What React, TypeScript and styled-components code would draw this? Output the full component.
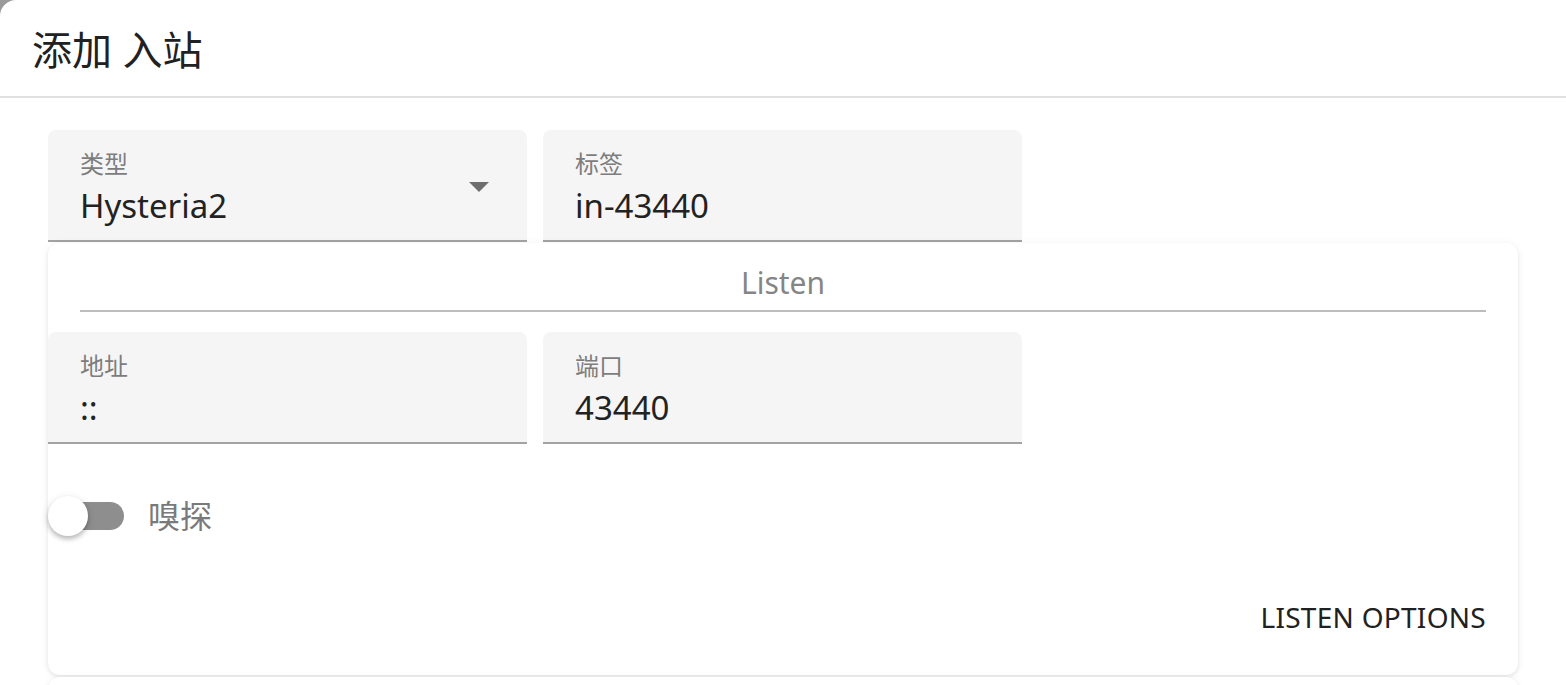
import React from "react";
import styled, { createGlobalStyle } from "styled-components";

const Global = createGlobalStyle`
  html, body { margin: 0; padding: 0; height: 100%; }
  body {
    background: #9a9a9a;
    overflow: hidden;
    font-family: "Noto Sans", "Noto Sans CJK SC", sans-serif;
  }
`;

const Dialog = styled.div`
  background: #fff;
  border-top-left-radius: 16px;
  width: 1566px;
  height: 685px;
  overflow: hidden;
  display: flex;
  flex-direction: column;
`;

const Header = styled.div`
  padding: 30px 32px 26px;
  border-bottom: 2px solid #e0e0e0;
`;

const Title = styled.h1`
  margin: 0;
  font-size: 40px;
  line-height: 40px;
  font-weight: 400;
  color: #212121;
`;

const Body = styled.div`
  padding: 32px 48px 0;
  display: flex;
  flex-direction: column;
  background: #fff;
`;

const Row = styled.div`
  display: flex;
  gap: 16px;
`;

const Field = styled.div`
  width: 479px;
  height: 110px;
  box-sizing: content-box;
  background: #f5f5f5;
  border-radius: 8px 8px 0 0;
  border-bottom: 2px solid #a3a3a3;
  display: flex;
  align-items: center;
`;

const FieldBody = styled.div`
  flex: 1;
  align-self: stretch;
  padding: 22px 32px 0;
  display: flex;
  flex-direction: column;
`;

const Label = styled.div`
  font-size: 24px;
  line-height: 24px;
  color: #7d7d7d;
  margin-bottom: 13px;
`;

const Value = styled.div`
  font-size: 33px;
  line-height: 34px;
  color: #222;
`;

const Arrow = styled.div`
  width: 0;
  height: 0;
  border-left: 10px solid transparent;
  border-right: 10px solid transparent;
  border-top: 10px solid #6e6e6e;
  margin: 3px 38px 0 0;
`;

const Card = styled.div`
  margin-top: 1px;
  width: 1470px;
  height: 432px;
  background: #fff;
  border-radius: 12px;
  box-shadow: 0 2px 4px rgba(0, 0, 0, 0.08), 0 1px 10px rgba(0, 0, 0, 0.05);
  display: flex;
  flex-direction: column;
`;

const SectionTitle = styled.div`
  margin: 25px 32px 0;
  padding-bottom: 12px;
  border-bottom: 2px solid #bdbdbd;
  text-align: center;
  font-size: 30px;
  line-height: 30px;
  color: #858585;
`;

const CardRow = styled(Row)`
  margin-top: 20px;
`;

const SwitchRow = styled.div`
  margin-top: 52px;
  display: flex;
  align-items: center;
  height: 40px;
`;

const Switch = styled.div`
  position: relative;
  width: 76px;
  height: 40px;
  display: flex;
  align-items: center;
`;

const Track = styled.div`
  margin-left: 4px;
  width: 72px;
  height: 28px;
  border-radius: 14px;
  background: #8e8e8e;
`;

const Thumb = styled.div`
  position: absolute;
  left: 0;
  top: 0;
  width: 40px;
  height: 40px;
  border-radius: 50%;
  background: #fff;
  box-shadow: 0 3px 4px rgba(0, 0, 0, 0.2), 0 2px 8px rgba(0, 0, 0, 0.12);
`;

const SwitchLabel = styled.span`
  margin-left: 24px;
  font-size: 32px;
  line-height: 40px;
  color: #7a7a7a;
`;

const Actions = styled.div`
  margin-top: auto;
  padding: 0 32px 44px;
  display: flex;
  justify-content: flex-end;
`;

const TextButton = styled.button`
  background: none;
  border: none;
  padding: 0;
  font-family: inherit;
  font-size: 28px;
  line-height: 28px;
  color: #212121;
  text-transform: uppercase;
  letter-spacing: 0.01em;
`;

const NextCard = styled.div`
  margin-top: 2px;
  width: 1470px;
  height: 40px;
  background: #fff;
  border-radius: 12px 12px 0 0;
  box-shadow: 0 2px 4px rgba(0, 0, 0, 0.08), 0 1px 10px rgba(0, 0, 0, 0.05);
`;

export default function App() {
  return (
    <>
      <Global />
      <Dialog>
        <Header>
          <Title>添加 入站</Title>
        </Header>
        <Body>
          <Row>
            <Field>
              <FieldBody>
                <Label>类型</Label>
                <Value>Hysteria2</Value>
              </FieldBody>
              <Arrow />
            </Field>
            <Field>
              <FieldBody>
                <Label>标签</Label>
                <Value>in-43440</Value>
              </FieldBody>
            </Field>
          </Row>
          <Card>
            <SectionTitle>Listen</SectionTitle>
            <CardRow>
              <Field>
                <FieldBody>
                  <Label>地址</Label>
                  <Value>::</Value>
                </FieldBody>
              </Field>
              <Field>
                <FieldBody>
                  <Label>端口</Label>
                  <Value>43440</Value>
                </FieldBody>
              </Field>
            </CardRow>
            <SwitchRow>
              <Switch>
                <Track />
                <Thumb />
              </Switch>
              <SwitchLabel>嗅探</SwitchLabel>
            </SwitchRow>
            <Actions>
              <TextButton>Listen Options</TextButton>
            </Actions>
          </Card>
          <NextCard />
        </Body>
      </Dialog>
    </>
  );
}
